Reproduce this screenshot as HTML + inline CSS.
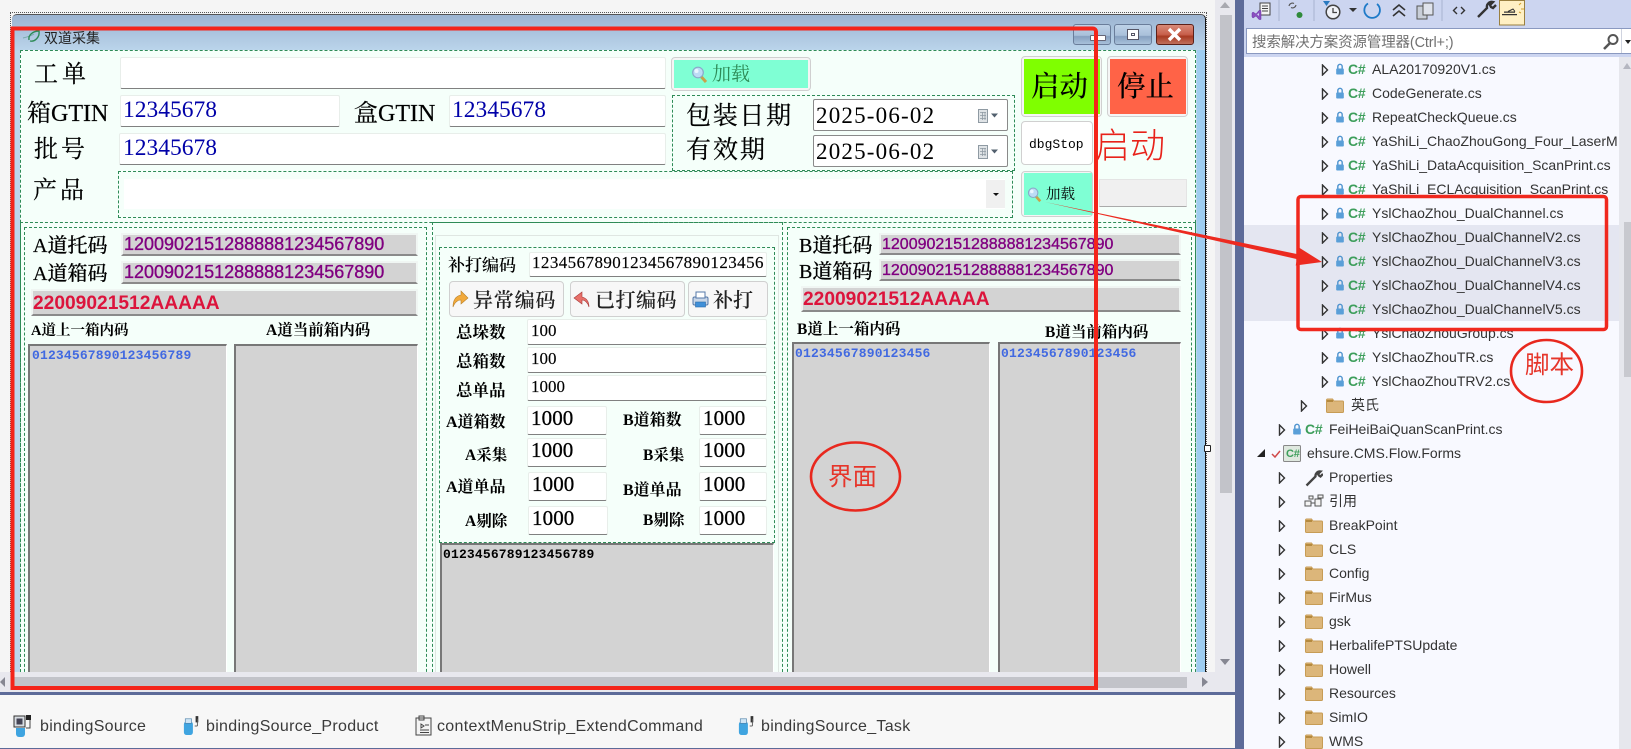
<!DOCTYPE html>
<html lang="zh"><head><meta charset="utf-8"><title>双道采集</title>
<style>
html,body{margin:0;padding:0;background:#f5f5f5}
#p{position:relative;width:1631px;height:749px;overflow:hidden;background:#f5f5f5;font-family:"Liberation Sans","Noto Sans CJK SC",sans-serif}
#p div,#p span,#p svg{position:absolute;box-sizing:border-box}
.l{white-space:nowrap;line-height:30px;height:30px;color:#000}
.s{font-family:"Liberation Serif","Noto Serif CJK SC",serif}
.i{background:#fff;border:1px solid #e8eeea;border-bottom:1px solid #808080;border-radius:2px}
.g{background:#d3d3d3;border:2px solid #f0f6f3;border-bottom:2px solid #8a8a8a}
.b{background:#d3d3d3;border-left:2px solid #777;border-top:2px solid #777;border-right:1px solid #fff}
.d{border:1px dashed #2e8b57}
.pu{color:#800080;font-family:"Liberation Sans",sans-serif;-webkit-text-stroke:.35px #800080}
.cr{color:#dc143c;font:bold 19.2px/30px "Liberation Sans",sans-serif}
.bl{color:#4169e1;font:bold 13px/20px "Liberation Mono",monospace;letter-spacing:.17px;white-space:nowrap}
.n{font:21px/30px "Liberation Serif",serif;color:#000;letter-spacing:.1px;-webkit-text-stroke:.3px #000}
.m{font:17px/30px "Liberation Serif",serif;color:#000;-webkit-text-stroke:.15px #000}
.lb{font-weight:700;font-size:16px}
.tt{font-size:20px;font-weight:500;-webkit-text-stroke:.2px #000}
.btn{background:#f7f7f7;border:1px solid #d0d0d0;border-radius:4px}
.bx{font-size:20px;font-weight:600;color:#222}
.wb{border:1px solid #6a7d9a;border-radius:3px;background:linear-gradient(#bed2e8 0,#a9c0da 55%,#86a0c0 60%,#a8c0da 100%);top:24px;height:21px;width:38px}
.r{left:0;height:24px;width:1px}
.t{white-space:nowrap;font-size:14px;line-height:24px;color:#333;top:-1px}
.cs{color:#3d9e5b;font:bold 14px/24px "Liberation Sans",sans-serif;top:-1px;letter-spacing:-.2px;white-space:nowrap}
.ar{top:6px;width:8px;height:12px}
.lk{top:5px;width:10px;height:12px}
.d3 .ar{left:1321px}.d3 .lk{left:1335px}.d3 .cs{left:1348px}.d3 .t{left:1372px}
.d2 .ar{left:1278px}.d2 .lk{left:1292px}.d2 .cs{left:1305px}.d2 .t{left:1329px}
.f{left:1305px;top:4px;width:18px;height:15px}
.bt{white-space:nowrap;font-size:16px;line-height:24px;color:#3a3a3a;top:715px;letter-spacing:.3px}
</style></head><body><div id="p">
<svg width="0" height="0" style="left:0;top:0"><defs>
<symbol id="ar" viewBox="0 0 8 12"><path d="M1.5 1 L6.5 6 L1.5 11 Z" fill="#f8f9ff" stroke="#333" stroke-width="1.4"/></symbol>
<symbol id="lk" viewBox="0 0 9 11"><path d="M2.5 5V3.2a2 2 0 0 1 4 0V5" fill="none" stroke="#4f94cf" stroke-width="1.3"/><rect x="1" y="5" width="7" height="5.5" rx=".8" fill="#5a9fd8"/></symbol>
<symbol id="fo" viewBox="0 0 18 15"><path d="M.5 2a1 1 0 0 1 1-1h5l1.5 2h8.5a1 1 0 0 1 1 1v9.5a1 1 0 0 1-1 1h-15a1 1 0 0 1-1-1z" fill="#dcb67a" stroke="#c79c55"/><path d="M1 3h6" stroke="#b58a3f" stroke-width="2"/></symbol>
<symbol id="mg" viewBox="0 0 16 18"><path d="M9.5 10.5L14.5 16" stroke="#c9a24a" stroke-width="3"/><circle cx="6.5" cy="6.5" r="5.3" fill="#bcdcf5" stroke="#8aa9c9" stroke-width="1.2"/><circle cx="5" cy="5" r="2" fill="#eaf6ff"/></symbol>
<symbol id="cal" viewBox="0 0 21 14"><rect x=".5" y=".5" width="9" height="13" fill="#dfe3e6" stroke="#8f9aa3"/><path d="M2 3.5h6M2 6.5h6M2 9.5h6M4.5 3v8M7 3v8" stroke="#8f9aa3" stroke-width=".8"/><path d="M13 4.5h7l-3.5 4z" fill="#52606e"/></symbol>
<symbol id="bs" viewBox="0 0 20 26"><rect x="1" y="8" width="10" height="15" rx="3" fill="#3fa4e0"/><rect x="2.500" y="5" width="7" height="5" fill="#cfe5f5" stroke="#4a7fa8" stroke-width=".7"/><path d="M14 2h3v7h-3z" fill="#333"/><path d="M13 13h3" stroke="#555"/><path d="M16 5v8" stroke="#555"/></symbol>
</defs></svg>

<!-- designer frame -->
<div style="left:10px;top:12px;width:1197px;height:660px;border:1px dotted #555;border-bottom:0"></div>
<div style="left:12px;top:14px;width:1194px;height:658px;border-radius:5px 5px 0 0;background:linear-gradient(#9cb4d1 0,#bcd6ec 37px,#bcd6ec 100%);border-top:1px solid #555;border-right:1px solid #111"></div>
<div style="left:1197px;top:50px;width:8px;height:622px;background:#9fcdf0"></div>
<svg style="left:22px;top:29px" width="20" height="16" viewBox="0 0 20 16"><path d="M1 9C5 8 9 7 12 5" stroke="#7aa" fill="none"/><path d="M7 11C6 6 11 2 17 2 18 8 13 13 8 12" fill="none" stroke="#2e8b57" stroke-width="1.4"/></svg>
<div class="l" style="left:44px;top:23px;font-size:14px;color:#222">双道采集</div>
<div class="wb" style="left:1073px"></div>
<div style="left:1090px;top:35px;width:16px;height:6px;background:#fff;border:1px solid #667;border-radius:1px"></div>
<div class="wb" style="left:1114px"></div>
<div style="left:1127px;top:29px;width:12px;height:11px;background:#fff;border:1px solid #556"></div>
<div style="left:1131px;top:33px;width:4px;height:3px;border:1px solid #556"></div>
<div class="wb" style="left:1155.5px;border-color:#5c2018;background:linear-gradient(#d88a78 0,#c8604c 50%,#a83a22 60%,#c0705c 100%)"></div>
<svg style="left:1166px;top:27px" width="17" height="15" viewBox="0 0 17 15"><path d="M3 2L14 13M14 2L3 13" stroke="#fff" stroke-width="3.4"/></svg>

<!-- client area -->
<div style="left:20px;top:50px;width:1176px;height:622px;background:#f5fffa;border:1px dashed #2e8b57;border-bottom:0"></div>

<!-- top fields -->
<div class="l s" style="left:34px;top:60px;font-size:24px;letter-spacing:4px;-webkit-text-stroke:.2px #000">工单</div>
<div class="i" style="left:120px;top:57px;width:546px;height:32px"></div>
<div class="l s" style="left:27px;top:99px;font-size:24px;-webkit-text-stroke:.2px #000">箱GTIN</div>
<div class="i" style="left:120px;top:95px;width:220px;height:32px"></div>
<div class="l s" style="left:123px;top:95px;font-size:23.5px;color:#0000a8">12345678</div>
<div class="l s" style="left:354px;top:99px;font-size:24px;-webkit-text-stroke:.2px #000">盒GTIN</div>
<div class="i" style="left:449px;top:95px;width:217px;height:32px"></div>
<div class="l s" style="left:452px;top:95px;font-size:23.5px;color:#0000a8">12345678</div>
<div class="l s" style="left:34px;top:135px;font-size:24px;letter-spacing:3px;-webkit-text-stroke:.2px #000">批号</div>
<div class="i" style="left:119px;top:133px;width:547px;height:32px"></div>
<div class="l s" style="left:123px;top:133px;font-size:23.5px;color:#0000a8">12345678</div>
<div class="l s" style="left:33px;top:176px;font-size:24px;letter-spacing:3px;-webkit-text-stroke:.2px #000">产品</div>
<div class="d" style="left:118px;top:171px;width:895px;height:47px"></div>
<div style="left:124px;top:179px;width:881px;height:30px;background:#fff"></div>
<div style="left:986px;top:180px;width:19px;height:28px;background:#f0f0f0"></div>
<div style="left:993px;top:193px;width:0;height:0;border-left:3px solid transparent;border-right:3px solid transparent;border-top:3px solid #111"></div>

<div class="btn" style="left:671px;top:57px;width:140px;height:34px;background:#f5f5f5"></div>
<div style="left:674px;top:60px;width:134px;height:28px;background:#7fffd4"></div>
<svg style="left:691px;top:66px" width="17" height="18"><use href="#mg" width="17" height="18"/></svg>
<div class="l s" style="left:712px;top:60px;font-size:19px;color:#2e8b57">加载</div>

<div class="d" style="left:672px;top:95px;width:343px;height:76px"></div>
<div class="l s" style="left:686px;top:102px;font-size:25px;letter-spacing:1.700px;-webkit-text-stroke:.2px #000">包装日期</div>
<div class="l s" style="left:686px;top:136px;font-size:25px;letter-spacing:2px;-webkit-text-stroke:.2px #000">有效期</div>
<div style="left:813px;top:99px;width:195px;height:32px;background:#fff;border:1px solid #8a8a8a;border-radius:2px"></div>
<div class="l s" style="left:816px;top:101px;font-size:23px;letter-spacing:1.2px">2025-06-02</div>
<svg style="left:978px;top:109px" width="21" height="14"><use href="#cal" width="21" height="14"/></svg>
<div style="left:813px;top:135px;width:195px;height:32px;background:#fff;border:1px solid #8a8a8a;border-radius:2px"></div>
<div class="l s" style="left:816px;top:137px;font-size:23px;letter-spacing:1.2px">2025-06-02</div>
<svg style="left:978px;top:145px" width="21" height="14"><use href="#cal" width="21" height="14"/></svg>

<div class="btn" style="left:1021px;top:56px;width:81px;height:61px;background:#f5f5f5"></div>
<div style="left:1024px;top:59px;width:76px;height:55px;background:#7fff00"></div>
<div class="l s" style="left:1031px;top:73px;font-size:28.5px;font-weight:500">启动</div>
<div class="btn" style="left:1107px;top:56px;width:81px;height:61px;background:#f5f5f5"></div>
<div style="left:1110px;top:59px;width:76px;height:55px;background:#ff6347"></div>
<div class="l s" style="left:1117px;top:73px;font-size:28.5px;font-weight:500">停止</div>
<div class="btn" style="left:1021px;top:121px;width:72px;height:44px;background:#fff"></div>
<div class="l" style="left:1029px;top:130px;font:13px/30px 'Liberation Mono',monospace">dbgStop</div>
<div class="l" style="left:1095px;top:127px;font-size:35px;line-height:40px;height:40px;color:#e8221a;font-weight:300">启动</div>
<div class="btn" style="left:1021px;top:171px;width:72px;height:46px;background:#f5f5f5"></div>
<div style="left:1024px;top:173px;width:68px;height:42px;background:#7fffd4"></div>
<svg style="left:1027px;top:187px" width="15" height="16"><use href="#mg" width="15" height="16"/></svg>
<div class="l s" style="left:1046px;top:180px;font-size:14.5px">加载</div>
<div style="left:1099px;top:179px;width:88px;height:28px;background:#f0f0f0;border:1px solid #e4e4e4;border-bottom:1px solid #aaa"></div>

<!-- lower containers -->
<div class="d" style="left:20px;top:222px;width:1176px;height:460px"></div>
<div class="d" style="left:24px;top:227px;width:403px;height:460px"></div>
<div class="d" style="left:432px;top:222px;width:351px;height:460px"></div>
<div class="d" style="left:787px;top:227px;width:405px;height:460px"></div>

<!-- A panel -->
<div class="l s tt" style="left:33px;top:231px">A道托码</div>
<div class="g" style="left:121px;top:233px;width:297px;height:23px"></div>
<div class="l pu" style="left:124px;top:229px;font-size:18px">12009021512888881234567890</div>
<div class="l s tt" style="left:33px;top:259px">A道箱码</div>
<div class="g" style="left:121px;top:261px;width:297px;height:23px"></div>
<div class="l pu" style="left:124px;top:257px;font-size:18px">12009021512888881234567890</div>
<div class="g" style="left:31px;top:289px;width:387px;height:27px"></div>
<div class="l cr" style="left:33px;top:289px">22009021512AAAAA</div>
<div class="l s" style="left:31px;top:316px;font-size:14.5px;font-weight:700">A道上一箱内码</div>
<div class="l s" style="left:266px;top:316px;font-size:15.5px;font-weight:700">A道当前箱内码</div>
<div class="b" style="left:28px;top:344px;width:199px;height:328px"></div>
<div class="bl" style="left:32px;top:346px">01234567890123456789</div>
<div class="b" style="left:234px;top:344px;width:184px;height:328px"></div>

<!-- middle -->
<div style="left:435px;top:235px;width:344px;height:437px;border:1px solid #dfe6e2;border-bottom:0"></div>
<div class="d" style="left:439px;top:247px;width:336px;height:296px"></div>
<div class="l s" style="left:448px;top:251px;font-size:17px;font-weight:600">补打编码</div>
<div class="i" style="left:529px;top:252px;width:238px;height:25px"></div>
<div class="l" style="left:532px;top:248px;font:17px/30px 'Liberation Serif',serif;letter-spacing:.42px;-webkit-text-stroke:.15px #000">12345678901234567890123456</div>

<div class="btn" style="left:449px;top:281px;width:115px;height:36px"></div>
<svg style="left:452px;top:289px" width="17" height="20" viewBox="0 0 17 20"><path d="M1 18C1 11 4 7 9 6V2l7 7-7 6v-4C6 11 3 13 1 18Z" fill="#f2a93b" stroke="#b8812b" stroke-width=".6"/></svg>
<div class="l s bx" style="left:473px;top:286px;letter-spacing:.8px">异常编码</div>
<div class="btn" style="left:570px;top:281px;width:115px;height:36px"></div>
<svg style="left:573px;top:289px" width="17" height="20" viewBox="0 0 17 20"><path d="M16 18C16 12 13 9 9 8V3L1 9l8 6v-4c3 0 6 3 7 7Z" fill="#e8706a" stroke="#a83a3a" stroke-width=".6"/></svg>
<div class="l s bx" style="left:595px;top:286px;letter-spacing:.5px">已打编码</div>
<div class="btn" style="left:688px;top:281px;width:80px;height:36px"></div>
<svg style="left:692px;top:291px" width="17" height="17" viewBox="0 0 17 17"><rect x="1" y="6" width="15" height="8" rx="1.500" fill="#c8d6e8" stroke="#5578a8"/><rect x="4" y="1" width="9" height="6" fill="#fff" stroke="#5578a8"/><rect x="3.500" y="11" width="10" height="5" fill="#3f8fd8" stroke="#2a6aa8" stroke-width=".6"/></svg>
<div class="l s bx" style="left:713px;top:286px">补打</div>

<div class="l s lb" style="left:456px;top:318px;font-size:16.5px">总垛数</div>
<div class="i" style="left:527px;top:319px;width:240px;height:26px"></div>
<div class="l m" style="left:531px;top:316px">100</div>
<div class="l s lb" style="left:456px;top:347px;font-size:16.5px">总箱数</div>
<div class="i" style="left:527px;top:347px;width:240px;height:26px"></div>
<div class="l m" style="left:531px;top:344px">100</div>
<div class="l s lb" style="left:456px;top:376px;font-size:16.5px">总单品</div>
<div class="i" style="left:527px;top:375px;width:240px;height:26px"></div>
<div class="l m" style="left:531px;top:372px">1000</div>

<div class="l s lb" style="left:446px;top:408px">A道箱数</div>
<div class="i" style="left:527px;top:406px;width:80px;height:29px"></div>
<div class="l n" style="left:531px;top:403px">1000</div>
<div class="l s lb" style="left:623px;top:406px">B道箱数</div>
<div class="i" style="left:699px;top:406px;width:68px;height:29px"></div>
<div class="l n" style="left:703px;top:403px">1000</div>

<div class="l s lb" style="left:465px;top:441px;font-size:15.5px">A采集</div>
<div class="i" style="left:527px;top:438px;width:80px;height:29px"></div>
<div class="l n" style="left:531px;top:435px">1000</div>
<div class="l s lb" style="left:643px;top:441px;font-size:15.5px">B采集</div>
<div class="i" style="left:699px;top:438px;width:68px;height:29px"></div>
<div class="l n" style="left:703px;top:435px">1000</div>

<div class="l s lb" style="left:446px;top:473px">A道单品</div>
<div class="i" style="left:528px;top:472px;width:79px;height:29px"></div>
<div class="l n" style="left:532px;top:469px">1000</div>
<div class="l s lb" style="left:623px;top:476px">B道单品</div>
<div class="i" style="left:699px;top:472px;width:68px;height:29px"></div>
<div class="l n" style="left:703px;top:469px">1000</div>

<div class="l s lb" style="left:465px;top:507px;font-size:15.5px">A剔除</div>
<div class="i" style="left:528px;top:506px;width:80px;height:29px"></div>
<div class="l n" style="left:532px;top:503px">1000</div>
<div class="l s lb" style="left:643px;top:506px;font-size:15.5px">B剔除</div>
<div class="i" style="left:699px;top:506px;width:68px;height:29px"></div>
<div class="l n" style="left:703px;top:503px">1000</div>

<div class="b" style="left:440px;top:543px;width:334px;height:129px"></div>
<div class="bl" style="left:443px;top:545px;color:#000">0123456789123456789</div>

<!-- B panel -->
<div class="l s tt" style="left:799px;top:231px">B道托码</div>
<div class="g" style="left:879px;top:233px;width:302px;height:22px"></div>
<div class="l pu" style="left:882px;top:230px;font-size:16px">12009021512888881234567890</div>
<div class="l s tt" style="left:799px;top:257px">B道箱码</div>
<div class="g" style="left:879px;top:259px;width:302px;height:22px"></div>
<div class="l pu" style="left:882px;top:256px;font-size:16px">12009021512888881234567890</div>
<div class="g" style="left:801px;top:286px;width:380px;height:26px"></div>
<div class="l cr" style="left:803px;top:285px">22009021512AAAAA</div>
<div class="l s" style="left:797px;top:315px;font-size:15.5px;font-weight:700">B道上一箱内码</div>
<div class="l s" style="left:1045px;top:318px;font-size:15.5px;font-weight:700">B道当前箱内码</div>
<div class="b" style="left:792px;top:342px;width:198px;height:330px"></div>
<div class="bl" style="left:795px;top:344px">01234567890123456</div>
<div class="b" style="left:998px;top:342px;width:183px;height:330px"></div>
<div class="bl" style="left:1001px;top:344px">01234567890123456</div>

<!-- editor chrome -->
<div style="left:1207px;top:0;width:28px;height:672px;background:#f5f5f5"></div>
<div style="left:1215px;top:0;width:20px;height:692px;background:#e8e8ee"></div>
<div style="left:1220px;top:15px;width:12px;height:478px;background:#c2c3c9"></div>
<div style="left:1220px;top:2px;width:0;height:0;border-left:5px solid transparent;border-right:5px solid transparent;border-bottom:6px solid #a8a9b0"></div>
<div style="left:1220px;top:659px;width:0;height:0;border-left:5.500px solid transparent;border-right:5.500px solid transparent;border-top:6px solid #868792"></div>
<div style="top:445px;width:7px;height:7px;background:#fff;border:1px solid #222;border-radius:1px;left:1203.500px"></div>
<div style="left:0;top:672px;width:1235px;height:20px;background:#e8e8ee"></div>
<div style="left:14px;top:677px;width:1173px;height:11px;background:#c2c3c9"></div>
<div style="left:0;top:677px;width:0;height:0;border-top:5.500px solid transparent;border-bottom:5.500px solid transparent;border-right:5px solid #868792"></div>
<div style="left:1202px;top:677px;width:0;height:0;border-top:5.500px solid transparent;border-bottom:5.500px solid transparent;border-left:6px solid #868792"></div>
<div style="left:0;top:692px;width:1235px;height:3px;background:#5d6b99"></div>
<div style="left:0;top:695px;width:1235px;height:53px;background:#f7f7f7"></div>
<div style="left:0;top:748px;width:1235px;height:1px;background:#5d6b99"></div>

<!-- component tray -->
<svg style="left:13px;top:714px" width="22" height="24" viewBox="0 0 22 24"><rect x="1" y="2" width="11" height="11" fill="#d8dde2" stroke="#333"/><rect x="3.500" y="4.500" width="6" height="6" fill="#445"/><rect x="13" y="1" width="5" height="5" fill="#222"/><path d="M3 14h9v6a3 3 0 0 1-3 3H6a3 3 0 0 1-3-3z" fill="#3fa4e0"/><path d="M17 6v8h-4" stroke="#444" fill="none"/></svg>
<div class="bt" style="left:40px">bindingSource</div>
<svg style="left:183px;top:714px" width="18" height="24"><use href="#bs" width="18" height="24"/></svg>
<div class="bt" style="left:206px">bindingSource_Product</div>
<svg style="left:415px;top:715px" width="18" height="22" viewBox="0 0 18 22"><rect x="1" y="3" width="15" height="17" fill="#f4f4f4" stroke="#444"/><path d="M4 3V1h5v4H4zM6 9l3 2-3 2zM10 10h4M5 15h9M5 17.500h9" stroke="#444" fill="none"/></svg>
<div class="bt" style="left:437px">contextMenuStrip_ExtendCommand</div>
<svg style="left:738px;top:714px" width="18" height="24"><use href="#bs" width="18" height="24"/></svg>
<div class="bt" style="left:761px">bindingSource_Task</div>

<!-- solution explorer -->
<div style="left:1235px;top:0;width:9px;height:749px;background:#5d6b99"></div>
<div style="left:1244px;top:0;width:387px;height:58px;background:#ccd5f0"></div>
<svg style="left:1244px;top:0" width="387" height="28" viewBox="1244 0 387 28">
<rect x="1499.500" y=".5" width="25" height="24.500" fill="#fff0c4" stroke="#9a8040"/>
<rect x="1260" y="3" width="10" height="12" fill="#f4f4f4" stroke="#444"/><path d="M1262 6h6M1262 8.500h6M1262 11h6" stroke="#444" stroke-width=".9"/>
<path d="M1253 12l3 2 3-3.500h2v9h-2l-3-3.500-3 2-1-1v-4z" fill="#8a4fc0" stroke="#6b2fa8" stroke-width=".5"/><path d="M1259 13l-2 1.500 2 1.500z" fill="#ccd5f0"/>
<path d="M1279 0v21M1314 0v21M1442 0v21" stroke="#a9b3d0"/>
<path d="M1289 6a3.500 3.500 0 0 1 5-2.500M1296 5a3.500 3.500 0 0 1-5 2.500" fill="none" stroke="#555" stroke-width="1.100"/><circle cx="1299.500" cy="15" r="3" fill="#2f8a3a"/>
<path d="M1323 1h7l-3.500 5z" fill="#2a7ac0"/><circle cx="1333" cy="12" r="6.800" fill="#f0f2f8" stroke="#444" stroke-width="1.500"/><path d="M1333 8v4.500h4" stroke="#444" stroke-width="1.300" fill="none"/>
<path d="M1349 8h8l-4 4z" fill="#333"/>
<path d="M1368 3.500A7.800 7.800 0 1 0 1377 4" fill="none" stroke="#1e7ac8" stroke-width="1.800"/>
<path d="M1393 10l6-5 6 5M1393 16l6-5 6 5" fill="none" stroke="#333" stroke-width="1.600"/>
<rect x="1417" y="6" width="10" height="13" fill="#c8ced8" stroke="#555"/><rect x="1423" y="3" width="10" height="12" fill="#dfe3ec" stroke="#555"/>
<path d="M1457 7l-3.500 3.500 3.500 3.500M1461 7l3.500 3.500-3.500 3.500" fill="none" stroke="#333" stroke-width="1.400"/>
<path d="M1478 17l9-9a5 5 0 0 1 6-6l-3 3 1 2 2 1 3-3" fill="none" stroke="#333" stroke-width="2.400"/>
<path d="M1504 11.500h11v1.200h-11zM1502 14h15v1.200h-15z" fill="#333"/><path d="M1508 11.500l5-2.500 2 2.500" fill="none" stroke="#333"/><path d="M1519 5l2-2M1521 9h3M1519 12l2 1" stroke="#d0a030"/>
</svg>
<div style="left:1246px;top:28px;width:385px;height:26px;background:#fff;border:1px solid #8a99c0;border-right:0"></div>
<div class="l" style="left:1252px;top:30px;height:26px;line-height:26px;font-size:14.5px;color:#717171;letter-spacing:-.01em">搜索解决方案资源管理器(Ctrl+;)</div>
<svg style="left:1602px;top:33px" width="18" height="18" viewBox="0 0 18 18"><circle cx="11" cy="6.500" r="4.500" fill="none" stroke="#555" stroke-width="2"/><path d="M8 10l-6 6" stroke="#555" stroke-width="2.600"/></svg>
<div style="left:1621px;top:29px;width:1px;height:24px;background:#cfd3df"></div>
<div style="left:1625px;top:40px;width:0;height:0;border-left:3.500px solid transparent;border-right:3.500px solid transparent;border-top:4px solid #222"></div>

<div style="left:1244px;top:57px;width:375px;height:692px;background:#f8f9ff;overflow:hidden"><div style="left:-1244px;top:-57px;width:1631px;height:749px">
<div style="left:1244px;top:225px;width:375px;height:96px;background:#e4e6f1"></div>
<div class="r d3" style="top:58px"><svg class="ar"><use href="#ar" width="8" height="12"/></svg><svg class="lk"><use href="#lk" width="10" height="12"/></svg><span class="cs">C#</span><span class="t">ALA20170920V1.cs</span></div>
<div class="r d3" style="top:82px"><svg class="ar"><use href="#ar" width="8" height="12"/></svg><svg class="lk"><use href="#lk" width="10" height="12"/></svg><span class="cs">C#</span><span class="t">CodeGenerate.cs</span></div>
<div class="r d3" style="top:106px"><svg class="ar"><use href="#ar" width="8" height="12"/></svg><svg class="lk"><use href="#lk" width="10" height="12"/></svg><span class="cs">C#</span><span class="t">RepeatCheckQueue.cs</span></div>
<div class="r d3" style="top:130px"><svg class="ar"><use href="#ar" width="8" height="12"/></svg><svg class="lk"><use href="#lk" width="10" height="12"/></svg><span class="cs">C#</span><span class="t">YaShiLi_ChaoZhouGong_Four_LaserM</span></div>
<div class="r d3" style="top:154px"><svg class="ar"><use href="#ar" width="8" height="12"/></svg><svg class="lk"><use href="#lk" width="10" height="12"/></svg><span class="cs">C#</span><span class="t">YaShiLi_DataAcquisition_ScanPrint.cs</span></div>
<div class="r d3" style="top:178px"><svg class="ar"><use href="#ar" width="8" height="12"/></svg><svg class="lk"><use href="#lk" width="10" height="12"/></svg><span class="cs">C#</span><span class="t">YaShiLi_ECLAcquisition_ScanPrint.cs</span></div>
<div class="r d3" style="top:202px"><svg class="ar"><use href="#ar" width="8" height="12"/></svg><svg class="lk"><use href="#lk" width="10" height="12"/></svg><span class="cs">C#</span><span class="t">YslChaoZhou_DualChannel.cs</span></div>
<div class="r d3" style="top:226px"><svg class="ar"><use href="#ar" width="8" height="12"/></svg><svg class="lk"><use href="#lk" width="10" height="12"/></svg><span class="cs">C#</span><span class="t">YslChaoZhou_DualChannelV2.cs</span></div>
<div class="r d3" style="top:250px"><svg class="ar"><use href="#ar" width="8" height="12"/></svg><svg class="lk"><use href="#lk" width="10" height="12"/></svg><span class="cs">C#</span><span class="t">YslChaoZhou_DualChannelV3.cs</span></div>
<div class="r d3" style="top:274px"><svg class="ar"><use href="#ar" width="8" height="12"/></svg><svg class="lk"><use href="#lk" width="10" height="12"/></svg><span class="cs">C#</span><span class="t">YslChaoZhou_DualChannelV4.cs</span></div>
<div class="r d3" style="top:298px"><svg class="ar"><use href="#ar" width="8" height="12"/></svg><svg class="lk"><use href="#lk" width="10" height="12"/></svg><span class="cs">C#</span><span class="t">YslChaoZhou_DualChannelV5.cs</span></div>
<div class="r d3" style="top:322px"><svg class="ar"><use href="#ar" width="8" height="12"/></svg><svg class="lk"><use href="#lk" width="10" height="12"/></svg><span class="cs">C#</span><span class="t">YslChaoZhouGroup.cs</span></div>
<div class="r d3" style="top:346px"><svg class="ar"><use href="#ar" width="8" height="12"/></svg><svg class="lk"><use href="#lk" width="10" height="12"/></svg><span class="cs">C#</span><span class="t">YslChaoZhouTR.cs</span></div>
<div class="r d3" style="top:370px"><svg class="ar"><use href="#ar" width="8" height="12"/></svg><svg class="lk"><use href="#lk" width="10" height="12"/></svg><span class="cs">C#</span><span class="t">YslChaoZhouTRV2.cs</span></div>
<div class="r" style="top:394px"><svg class="ar" style="left:1300px"><use href="#ar" width="8" height="12"/></svg><svg class="f" style="left:1326px"><use href="#fo" width="18" height="15"/></svg><span class="t" style="left:1351px">英氏</span></div>
<div class="r d2" style="top:418px"><svg class="ar"><use href="#ar" width="8" height="12"/></svg><svg class="lk"><use href="#lk" width="10" height="12"/></svg><span class="cs">C#</span><span class="t">FeiHeiBaiQuanScanPrint.cs</span></div>
<div class="r" style="top:442px"><svg style="left:1257px;top:7px" width="8" height="9"><path d="M8 0V8H0Z" fill="#222"/></svg><svg style="left:1271px;top:7px" width="10" height="10"><path d="M1 5l3 3 5-6" stroke="#d04a4a" stroke-width="1.500" fill="none"/></svg><svg style="left:1283px;top:3px" width="18" height="17"><rect x=".5" y=".5" width="17" height="16" rx="1" fill="#dfe8df" stroke="#888"/></svg><span class="cs" style="left:1286px;top:1px;font-size:11px;line-height:22px">C#</span><span class="t" style="left:1307px">ehsure.CMS.Flow.Forms</span></div>
<div class="r d2" style="top:466px"><svg class="ar"><use href="#ar" width="8" height="12"/></svg><svg style="left:1305px;top:3px" width="18" height="18" viewBox="0 0 18 18"><path d="M1.500 16.500l9-9a4.500 4.500 0 0 1 5-5l-2.500 2.500 1 1.500 1.500 1 2.500-2.500" fill="none" stroke="#444" stroke-width="2.300"/></svg><span class="t">Properties</span></div>
<div class="r d2" style="top:490px"><svg class="ar"><use href="#ar" width="8" height="12"/></svg><svg style="left:1304px;top:4px" width="20" height="14" viewBox="0 0 20 14"><rect x="1" y="7" width="6" height="5" fill="#f4f4f4" stroke="#555"/><rect x="11" y="5" width="6" height="7" fill="#f4f4f4" stroke="#555"/><rect x="5" y="2" width="4" height="3" fill="#f4f4f4" stroke="#555"/><rect x="14" y="1" width="5" height="3" fill="#f4f4f4" stroke="#555"/><path d="M7 9h4" stroke="#555"/></svg><span class="t">引用</span></div>
<div class="r d2" style="top:514px"><svg class="ar"><use href="#ar" width="8" height="12"/></svg><svg class="f"><use href="#fo" width="18" height="15"/></svg><span class="t">BreakPoint</span></div>
<div class="r d2" style="top:538px"><svg class="ar"><use href="#ar" width="8" height="12"/></svg><svg class="f"><use href="#fo" width="18" height="15"/></svg><span class="t">CLS</span></div>
<div class="r d2" style="top:562px"><svg class="ar"><use href="#ar" width="8" height="12"/></svg><svg class="f"><use href="#fo" width="18" height="15"/></svg><span class="t">Config</span></div>
<div class="r d2" style="top:586px"><svg class="ar"><use href="#ar" width="8" height="12"/></svg><svg class="f"><use href="#fo" width="18" height="15"/></svg><span class="t">FirMus</span></div>
<div class="r d2" style="top:610px"><svg class="ar"><use href="#ar" width="8" height="12"/></svg><svg class="f"><use href="#fo" width="18" height="15"/></svg><span class="t">gsk</span></div>
<div class="r d2" style="top:634px"><svg class="ar"><use href="#ar" width="8" height="12"/></svg><svg class="f"><use href="#fo" width="18" height="15"/></svg><span class="t">HerbalifePTSUpdate</span></div>
<div class="r d2" style="top:658px"><svg class="ar"><use href="#ar" width="8" height="12"/></svg><svg class="f"><use href="#fo" width="18" height="15"/></svg><span class="t">Howell</span></div>
<div class="r d2" style="top:682px"><svg class="ar"><use href="#ar" width="8" height="12"/></svg><svg class="f"><use href="#fo" width="18" height="15"/></svg><span class="t">Resources</span></div>
<div class="r d2" style="top:706px"><svg class="ar"><use href="#ar" width="8" height="12"/></svg><svg class="f"><use href="#fo" width="18" height="15"/></svg><span class="t">SimIO</span></div>
<div class="r d2" style="top:730px"><svg class="ar"><use href="#ar" width="8" height="12"/></svg><svg class="f"><use href="#fo" width="18" height="15"/></svg><span class="t">WMS</span></div>
</div></div>
<div style="left:1619px;top:57px;width:12px;height:692px;background:#e6e7ed"></div>
<div style="left:1623px;top:63px;width:0;height:0;border-left:4.500px solid transparent;border-right:4.500px solid transparent;border-bottom:6px solid #b4b6c0"></div>
<div style="left:1624px;top:222px;width:7px;height:155px;background:#c8c9cf"></div>

<!-- annotations -->
<svg style="left:0;top:0" width="1631" height="749" viewBox="0 0 1631 749">
<path d="M12.500 688V28.500H1093a3 3 0 0 1 3 3V688Z" fill="none" stroke="#f4241a" stroke-width="4"/>
<rect x="1298" y="196.500" width="308.500" height="133" rx="3" fill="none" stroke="#f0281e" stroke-width="3.500"/>
<path d="M1045 202L1298 254.300 1299.500 247.900 1322 262 1295.700 265.500 1297 259.100Z" fill="#ec2a20"/>
<ellipse cx="855.500" cy="476.500" rx="44.500" ry="34" fill="none" stroke="#e8281e" stroke-width="2.600"/>
<ellipse cx="1546.500" cy="371" rx="35.500" ry="31" fill="none" stroke="#e8281e" stroke-width="2.600"/>
<text x="828" y="485" font-size="24.500" fill="#e6352a" font-family="Liberation Sans, Noto Sans CJK SC, sans-serif">界面</text>
<text x="1525" y="373" font-size="24.500" fill="#e6352a" font-family="Liberation Sans, Noto Sans CJK SC, sans-serif">脚本</text>
</svg>
</div></body></html>
